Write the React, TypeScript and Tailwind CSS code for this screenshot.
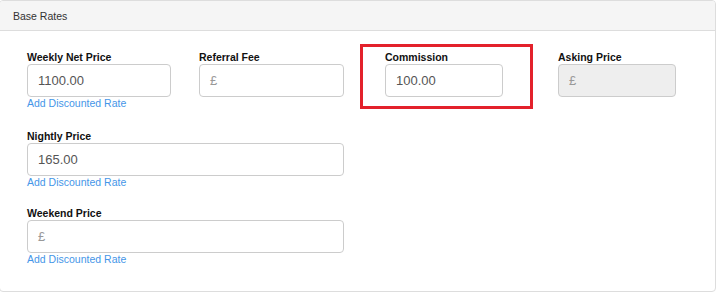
const font = { fontFamily: '"Liberation Sans", Arial, sans-serif' };

interface FieldProps {
  label: string;
  value?: string;
  width: string;
  disabled?: boolean;
  discount?: boolean;
}

const Field: React.FC<FieldProps> = ({ label, value, width, disabled, discount }) => {
  return (
    <div className={width}>
      <label className="block h-[13px] text-[10.5px] leading-[13px] font-bold text-[#111]">{label}</label>
      <div
        className={`h-[33px] rounded-[4px] border border-[#cccccc] px-[10px] flex items-center text-[13px] ${
          disabled ? "bg-[#eeeeee]" : "bg-white"
        } ${value ? "text-[#555]" : "text-[#999]"}`}
      >
        {value ? value : "£"}
      </div>
      {discount && (
        <a className="block h-[13px] text-[10.5px] leading-[13px] text-[#4596e8] cursor-pointer">
          Add Discounted Rate
        </a>
      )}
    </div>
  );
};

export default function App() {
  return (
    <div className="w-[718px] h-[293px] bg-white" style={font}>
      <div className="-ml-px w-[717px] rounded-[4px] border border-[#dddddd] overflow-hidden">
        <div className="h-[30px] bg-[#f5f5f5] border-b border-[#dddddd] pl-[13px] pt-[9px] text-[10.5px] leading-[13px] text-[#333]">
          Base Rates
        </div>
        <div className="pl-[27px] pt-[13px] pb-[25px]">
          <div className="flex items-start mb-[20px]">
            <div className="mt-[7px]">
              <Field label="Weekly Net Price" value="1100.00" width="w-[144px]" discount />
            </div>
            <div className="mt-[7px] ml-[28px]">
              <Field label="Referral Fee" width="w-[145px]" />
            </div>
            <div className="ml-[16px] border-[3px] border-[#e3212b] pt-[4px] pb-[9px] pl-[22px] pr-[27px]">
              <Field label="Commission" value="100.00" width="w-[118px]" />
            </div>
            <div className="mt-[7px] ml-[25px]">
              <Field label="Asking Price" width="w-[118px]" disabled />
            </div>
          </div>
          <div className="mb-[18px]">
            <Field label="Nightly Price" value="165.00" width="w-[317px]" discount />
          </div>
          <Field label="Weekend Price" width="w-[317px]" discount />
        </div>
      </div>
    </div>
  );
}
